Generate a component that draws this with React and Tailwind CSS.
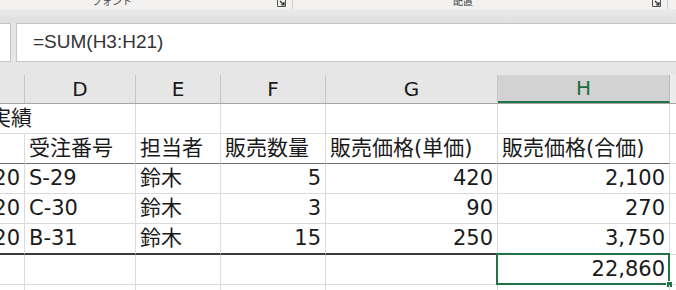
import { Fragment } from 'react';

const COLS = [
  { key: 'C', w: 'w-[25px]' },
  { key: 'D', w: 'w-[111px]' },
  { key: 'E', w: 'w-[85px]' },
  { key: 'F', w: 'w-[105px]' },
  { key: 'G', w: 'w-[172px]' },
  { key: 'H', w: 'w-[172px]' },
];

// r = right aligned (numbers)
const ROWS = [
  { cells: [{ t: '実績', overflow: true }, {}, {}, {}, {}, {}] },
  {
    line: 'thin',
    cells: [{}, { t: '受注番号' }, { t: '担当者' }, { t: '販売数量' }, { t: '販売価格(単価)' }, { t: '販売価格(合価)' }],
  },
  { cells: [{ t: '20', r: true }, { t: 'S-29' }, { t: '鈴木' }, { t: '5', r: true }, { t: '420', r: true }, { t: '2,100', r: true }] },
  { cells: [{ t: '20', r: true }, { t: 'C-30' }, { t: '鈴木' }, { t: '3', r: true }, { t: '90', r: true }, { t: '270', r: true }] },
  {
    line: 'thick',
    cells: [{ t: '20', r: true }, { t: 'B-31' }, { t: '鈴木' }, { t: '15', r: true }, { t: '250', r: true }, { t: '3,750', r: true }],
  },
  { cells: [{}, {}, {}, {}, {}, { t: '22,860', r: true, selected: true }] },
  { cells: [{}, {}, {}, {}, {}, {}] },
];

function Launcher() {
  return (
    <svg width="9" height="9" viewBox="0 0 9 9" className="block">
      <path d="M0.5 0.5h8v8h-8z" fill="none" stroke="#555" />
      <path d="M3 3l4 4M4 7h3V4" fill="none" stroke="#333" strokeWidth="1.2" />
    </svg>
  );
}

function RibbonGroup({ label, width, labelLeft }) {
  return (
    <div className={`${width} shrink-0 flex`}>
      <span className={`${labelLeft} mt-[-5px]`}>{label}</span>
      <div className="ml-auto mr-[6px] mt-[-2px]"><Launcher /></div>
      <div className="w-px h-full bg-[#d0d0d0]" />
    </div>
  );
}

function Cell({ col, cell, line }) {
  const bottom =
    line === 'thick'
      ? 'border-b-2 border-b-[#3a3a3a] h-[31px]'
      : line === 'thin'
        ? 'border-b border-b-[#6f6f6f] h-[30px]'
        : 'border-b border-b-[#dadada] h-[30px]';
  const right = cell.overflow ? 'border-r border-r-transparent' : 'border-r border-r-[#dadada]';
  return (
    <div
      className={`${col.w} shrink-0 flex items-center whitespace-nowrap relative ${bottom} ${right} ${
        cell.r ? 'justify-end pr-[4px]' : 'justify-start pl-[4px]'
      }`}
    >
      {cell.t && <span className={cell.overflow ? 'ml-[-14px]' : ''}>{cell.t}</span>}
      {cell.selected && (
        <>
          <div className="absolute left-[-2px] top-[-2px] right-[-1px] bottom-[-1px] border-2 border-[#217346] pointer-events-none" />
          <div className="absolute right-[-4px] bottom-[-4px] w-[7px] h-[7px] bg-[#217346] border border-white" />
        </>
      )}
    </div>
  );
}

export default function App() {
  return (
    <div className="w-[676px] h-[290px] overflow-hidden bg-white text-[#1a1a1a] font-['DejaVu_Sans','Noto_Sans_CJK_JP',sans-serif]">
      {/* ribbon group labels, scrolled mostly out of view */}
      <div className="h-[9px] bg-[#f3f2f1] overflow-hidden flex text-[10px] leading-[12px] text-[#444] font-['Noto_Sans_CJK_JP',sans-serif]">
        <RibbonGroup label="フォント" width="w-[293px]" labelLeft="ml-[92px]" />
        <RibbonGroup label="配置" width="w-[375px]" labelLeft="ml-[160px]" />
      </div>
      <div className="h-[14px] bg-gradient-to-b from-[#ebebeb] to-[#dedede]" />

      {/* formula bar */}
      <div className="h-[39px] flex bg-[#e6e6e6]">
        <div className="w-[11px] bg-white border-y border-r border-[#c6c6c6]" />
        <div className="w-[5px]" />
        <div className="flex-1 bg-white border-y border-l border-[#c6c6c6] flex items-center pl-[16px] text-[19px] text-[#333] font-['Liberation_Sans','Noto_Sans_CJK_JP',sans-serif]">
          =SUM(H3:H21)
        </div>
      </div>

      {/* column headers */}
      <div className="bg-[#e6e6e6] pt-[13px] border-b border-b-[#a6a6a6]">
        <div className="flex h-[28px] text-[20px]">
          {COLS.map((c) =>
            c.key === 'H' ? (
              <div
                key={c.key}
                className={`${c.w} shrink-0 flex items-center justify-center bg-[#d2d2d2] border-r border-r-[#b8b8b8] border-b-2 border-b-[#217346] text-[#1e6b40]`}
              >
                {c.key}
              </div>
            ) : (
              <div key={c.key} className={`${c.w} shrink-0 flex items-center justify-center border-r border-r-[#c6c6c6]`}>
                {c.key === 'C' ? '' : c.key}
              </div>
            )
          )}
          <div className="flex-1 bg-[#ebebeb]" />
        </div>
      </div>

      {/* grid */}
      <div className="text-[21px]">
        {ROWS.map((row, i) => (
          <Fragment key={i}>
            <div className="flex">
              {COLS.map((c, j) => (
                <Cell key={c.key} col={c} cell={row.cells[j]} line={row.line} />
              ))}
              <div className="flex-1 border-b border-b-[#dadada]" />
            </div>
          </Fragment>
        ))}
      </div>
    </div>
  );
}
